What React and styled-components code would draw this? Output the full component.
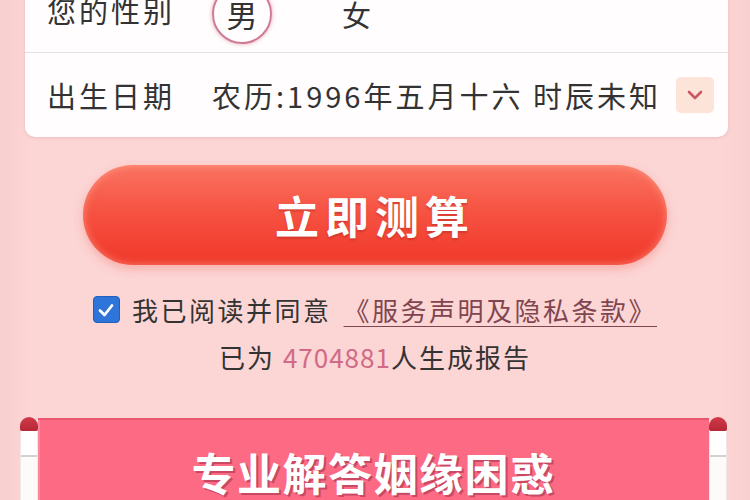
import React from "react";
import styled, { createGlobalStyle } from "styled-components";

const GlobalStyle = createGlobalStyle`
  html, body {
    margin: 0;
    padding: 0;
    background: #fcd4d4;
    font-family: "Noto Sans CJK SC", "Noto Sans", sans-serif;
    color: #333;
    overflow: hidden;
  }
`;

const Page = styled.div`
  width: 750px;
  height: 500px;
  overflow: hidden;
  background: linear-gradient(90deg, #f9cfcf 0, #fcd5d5 30px, #fcd5d5 720px, #f9d0d0 100%);
`;

const Card = styled.div`
  margin: -32px 22px 0 25px;
  background: #fffdfd;
  border-radius: 10px;
  box-shadow: 0 1px 3px rgba(200, 120, 120, 0.25);
`;

const Row = styled.div`
  display: flex;
  align-items: center;
  height: 84px;
  padding: 0 14px 0 22px;
  border-bottom: ${p => (p.$last ? "none" : "1px solid #e6dfdf")};
  font-size: 29px;
  letter-spacing: 3px;
  color: #333;
`;

const Label = styled.span`
  width: 130px;
  flex-shrink: 0;
  margin-right: 35px;
  white-space: nowrap;
`;

const Gender = styled.span`
  display: flex;
  align-items: center;
  justify-content: center;
  width: ${p => (p.$active ? "56px" : "auto")};
  height: ${p => (p.$active ? "56px" : "auto")};
  margin-right: ${p => (p.$active ? "70px" : "0")};
  border-radius: 50%;
  border: ${p => (p.$active ? "2px solid #cf7b93" : "none")};
  box-shadow: ${p => (p.$active ? "0 0 4px rgba(210, 110, 140, 0.6)" : "none")};
  font-size: ${p => (p.$active ? "31px" : "29px")};
  letter-spacing: 0;
  margin-top: 7px;
`;

const Value = styled.span`
  flex: 1;
  white-space: nowrap;
  overflow: hidden;
`;

const Select = styled.span`
  display: flex;
  align-items: center;
  justify-content: center;
  width: 38px;
  height: 36px;
  border-radius: 5px;
  background: #fde4d8;
  flex-shrink: 0;
`;

const Submit = styled.button`
  display: flex;
  align-items: center;
  justify-content: center;
  width: 584px;
  height: 100px;
  margin: 28px auto 0;
  border: none;
  border-radius: 50px;
  background: linear-gradient(180deg, #fa7360 0%, #f65040 50%, #f0382a 100%);
  box-shadow: 0 4px 10px rgba(240, 100, 90, 0.35), inset 0 0 8px rgba(255, 180, 160, 0.6);
  color: #fff;
  font-family: "Noto Sans CJK SC", sans-serif;
  font-size: 44px;
  font-weight: 700;
  letter-spacing: 6px;
  text-shadow: 0 2px 2px rgba(170, 40, 30, 0.45);
`;

const Agree = styled.div`
  display: flex;
  align-items: center;
  justify-content: center;
  margin-top: 26px;
  font-size: 26px;
  letter-spacing: 2.5px;
  color: #333;
  white-space: nowrap;
`;

const Check = styled.span`
  display: flex;
  align-items: center;
  justify-content: center;
  width: 25px;
  height: 25px;
  margin-right: 12px;
  border-radius: 4px;
  background: #2f74d8;
  border: 1px solid #1f5fbf;
`;

const Link = styled.span`
  margin-left: 12px;
  color: #7f4650;
  text-decoration: underline;
  text-underline-offset: 5px;
  text-decoration-thickness: 1px;
`;

const Count = styled.div`
  margin-top: 10px;
  text-align: center;
  font-size: 26px;
  letter-spacing: 2px;
  color: #333;
  white-space: nowrap;
`;

const Num = styled.span`
  color: #d06a86;
  letter-spacing: 1px;
`;

const Banner = styled.div`
  display: flex;
  align-items: flex-start;
  margin: 42px 23px 0 20px;
`;

const Rod = styled.div`
  width: 18px;
  flex-shrink: 0;
  display: flex;
  flex-direction: column;
`;

const Cap = styled.div`
  height: 14px;
  border-radius: 9px 9px 2px 2px;
  background: linear-gradient(180deg, #d23a48, #b52836);
`;

const Stick = styled.div`
  height: 80px;
  border-left: 1px solid #f1e6e6;
  border-right: 1px solid #f1e6e6;
  background: linear-gradient(180deg, #fff 24px, #d8d0d0 24px, #d8d0d0 26px, #fdfafa 26px);
`;

const Body = styled.div`
  flex: 1;
  height: 100px;
  margin-top: 1px;
  display: flex;
  justify-content: center;
  padding-top: 20px;
  background: #fd6a84;
  border-top: 2px solid #e8566f;
  box-shadow: inset 16px 0 0 -14px rgba(255, 255, 255, 0.2);
  color: #fff;
  font-size: 44px;
  font-weight: 700;
  letter-spacing: 1.5px;
  text-shadow: 2px 2px 0 #c94863;
`;

const Chevron = () => (
  <svg width="16" height="12" viewBox="0 0 16 12">
    <polyline points="2,3 8,9 14,3" fill="none" stroke="#cc5661" strokeWidth="2.6" strokeLinecap="round" strokeLinejoin="round" />
  </svg>
);

const Tick = () => (
  <svg width="18" height="18" viewBox="0 0 18 18">
    <polyline points="3,9.5 7.5,14 15,4.5" fill="none" stroke="#fff" strokeWidth="2.8" strokeLinecap="round" strokeLinejoin="round" />
  </svg>
);

const App = () => {
  return (
    <Page>
      <GlobalStyle />
      <Card>
        <Row>
          <Label>您的性别</Label>
          <Gender $active>男</Gender>
          <Gender>女</Gender>
        </Row>
        <Row $last>
          <Label>出生日期</Label>
          <Value>农历:1996年五月十六 时辰未知</Value>
          <Select>
            <Chevron />
          </Select>
        </Row>
      </Card>

      <Submit>立即测算</Submit>

      <Agree>
        <Check>
          <Tick />
        </Check>
        我已阅读并同意
        <Link>《服务声明及隐私条款》</Link>
      </Agree>
      <Count>
        已为 <Num>4704881</Num>人生成报告
      </Count>

      <Banner>
        <Rod>
          <Cap />
          <Stick />
        </Rod>
        <Body>专业解答姻缘困惑</Body>
        <Rod>
          <Cap />
          <Stick />
        </Rod>
      </Banner>
    </Page>
  );
};

export default App;
